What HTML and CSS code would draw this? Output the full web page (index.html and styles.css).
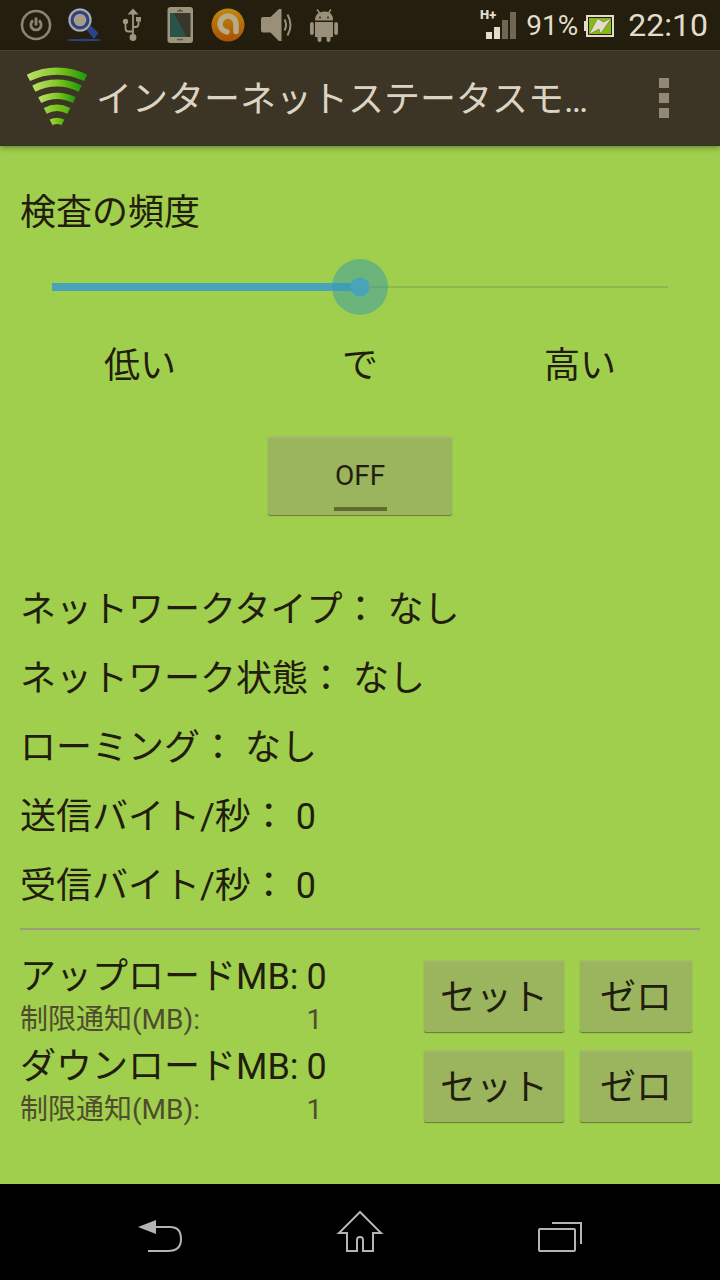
FILE: index.html
```html
<!DOCTYPE html>
<html lang="ja">
<head>
    <meta charset="UTF-8">
    <meta name="viewport" content="width=device-width, initial-scale=1">
    <title>インターネットステータスモ…</title>
    <link rel="stylesheet" href="styles.css">
</head>
<body>
    <div class="status-bar">
        <div class="status-icons">
            <svg width="48" height="50" viewBox="0 0 48 50" fill="none" stroke="#8d8370">
                <circle cx="24" cy="25" r="14" stroke-width="2.6"/>
                <path d="M21 20.5a5.2 5.2 0 1 0 6 0" stroke-width="2.8"/>
                <path d="M24 17.5v8" stroke-width="2.8"/>
            </svg>
            <svg width="48" height="50" viewBox="0 0 48 50">
                <path d="M26 29l4-4 8.500 8-4.500 6z" fill="#2c4289"/>
                <circle cx="20" cy="20" r="12" fill="#2c4289"/>
                <circle cx="20" cy="20" r="10.500" fill="none" stroke="#b5ab90" stroke-width="2"/>
                <circle cx="20" cy="20" r="6.300" fill="#a69d84"/>
                <path d="M8 40q16-1.500 32 0q-16 1.500-32 0z" fill="#2c4289" stroke="#2c4289"/>
            </svg>
            <svg width="48" height="50" viewBox="0 0 48 50" fill="none" stroke="#a0967f" stroke-width="1.8">
                <path d="M25 13v24M17.500 22v6.500q0 3 3 3h4.500M30.500 19v5q0 3-3 3H25"/>
                <g fill="#a0967f" stroke="none">
                    <path d="M25 8.500l5.500 6h-11z"/>
                    <circle cx="25" cy="37.500" r="3.400"/>
                    <circle cx="17.500" cy="21.500" r="2.700"/>
                    <path d="M28 17h5v4.500h-5z"/>
                </g>
            </svg>
            <svg width="48" height="50" viewBox="0 0 48 50">
                <rect x="11.500" y="7" width="25.500" height="36" rx="3" fill="#9d947e"/>
                <path d="M14 13h20.500v24H14z" fill="#37372b"/>
                <path d="M14 13h4l12.500 24H14z" fill="#285447"/>
                <path d="M21 11h6M24 9v2M21 39.500h6" stroke="#625a47" stroke-width="1.5"/>
            </svg>
            <svg width="48" height="50" viewBox="0 0 48 50">
                <defs>
                    <linearGradient id="orange" x1="0" y1="0" x2="0" y2="1">
                        <stop offset="0" stop-color="#c08a0c"/>
                        <stop offset="1" stop-color="#aa5007"/>
                    </linearGradient>
                </defs>
                <circle cx="24" cy="25" r="16.500" fill="url(#orange)"/>
                <path d="M23 32a8 8 0 1 1 9-8v7.500" fill="none" stroke="#b7ab8a" stroke-width="5.500" stroke-linecap="round"/>
            </svg>
            <svg width="48" height="50" viewBox="0 0 48 50" fill="none" stroke="#9a907a" stroke-width="2">
                <path d="M11 17h7.500L27 9h2.500v32H27l-8.500-8.500H11q-2 0-2-2V19q0-2 2-2z" fill="#9a907a" stroke="none"/>
                <path d="M32.500 19.500q3 5.500 0 11M35.500 14.500q6 10.500 0 21"/>
            </svg>
            <svg width="48" height="50" viewBox="0 0 48 50" fill="#9a907a">
                <path d="M15 20.500q0-8.500 9-9t9 9z"/>
                <path d="M17 9.500l3 4M31 9.500l-3 4" stroke="#9a907a" stroke-width="1.5"/>
                <path d="M15 22h18v15H15z"/>
                <rect x="10" y="22" width="3.800" height="13" rx="1.900"/>
                <rect x="34.200" y="22" width="3.800" height="13" rx="1.900"/>
                <rect x="17.500" y="33" width="4" height="9" rx="1.900"/>
                <rect x="26.500" y="33" width="4" height="9" rx="1.900"/>
                <circle cx="20" cy="17.500" r=".9" fill="#241e0e"/>
                <circle cx="28" cy="17.500" r=".9" fill="#241e0e"/>
            </svg>
        </div>
        <div class="status-info">
            <svg width="40" height="50" viewBox="0 0 40 50" fill="#e3dcca">
                <text class="network" x="0" y="19">H+</text>
                <path d="M6 32h6v7H6zM14 27h6v12h-6z"/>
                <path d="M22 20h6v19h-6zM30 12h6v27h-6z" fill="#6f6753"/>
            </svg>
            <span class="battery-level">91%</span>
            <svg width="32" height="50" viewBox="0 0 32 50">
                <path d="M0 21h3v10H0z" fill="#e3dcca"/>
                <rect x="3" y="16" width="26" height="20" fill="#241e0e" stroke="#e3dcca" stroke-width="2"/>
                <path d="M5 18h22v16H5z" fill="#86b913"/>
                <path d="M27.500 18l-8 4-6-3.500-8.500 16 10-5.500 1.500 5z" fill="#e3dcca" stroke="#5c6b20" stroke-width=".5"/>
            </svg>
            <time class="clock">22:10</time>
        </div>
    </div>

    <header class="action-bar">
        <svg class="app-icon" width="64" height="64" viewBox="0 0 64 64" fill="none">
            <defs>
                <linearGradient id="leaf" x1="0" y1="0" x2="1" y2="0">
                    <stop offset="0" stop-color="#b9df65"/>
                    <stop offset=".45" stop-color="#8cca32"/>
                    <stop offset=".6" stop-color="#6fbf14"/>
                    <stop offset="1" stop-color="#239a12"/>
                </linearGradient>
                <linearGradient id="leaf-small" x1="0" y1="0" x2="1" y2="0">
                    <stop offset="0" stop-color="#9ad344"/>
                    <stop offset=".5" stop-color="#7cc418"/>
                    <stop offset="1" stop-color="#56b314"/>
                </linearGradient>
            </defs>
            <g stroke="url(#leaf)">
                <path d="M4.400 11.900A63 63 0 0 1 61.600 11.900" stroke-width="7.200"/>
                <path d="M9.800 22.600A51 51 0 0 1 56.200 22.600" stroke-width="6.800"/>
                <path d="M15.700 34.100A38 38 0 0 1 50.300 34.100" stroke-width="6.600"/>
            </g>
            <g stroke="url(#leaf-small)">
                <path d="M21.200 44.800A26 26 0 0 1 44.800 44.800" stroke-width="6.400"/>
                <path d="M27.100 56.400A13 13 0 0 1 38.900 56.400" stroke-width="6.400"/>
            </g>
        </svg>
        <h1>インターネットステータスモ…</h1>
        <button type="button" class="menu-btn" aria-label="メニュー">
            <span></span><span></span><span></span>
        </button>
    </header>

    <main>
        <label class="frequency-label" for="frequency">検査の頻度</label>
        <input type="range" id="frequency" class="slider" min="0" max="100" value="50">
        <div class="slider-marks">
            <span>低い</span>
            <span>で</span>
            <span>高い</span>
        </div>

        <button type="button" class="btn toggle" aria-pressed="false">OFF</button>

        <div class="info">
            <p>ネットワークタイプ： なし</p>
            <p>ネットワーク状態： なし</p>
            <p>ローミング： なし</p>
            <p>送信バイト/秒： 0</p>
            <p>受信バイト/秒： 0</p>
        </div>

        <hr>

        <div class="traffic">
            <div class="traffic-row">
                <div class="counter">
                    <span>アップロードMB:</span><span>0</span>
                    <span class="limit">制限通知(MB):</span><span class="limit">1</span>
                </div>
                <button type="button" class="btn set">セット</button>
                <button type="button" class="btn zero">ゼロ</button>
            </div>
            <div class="traffic-row">
                <div class="counter">
                    <span>ダウンロードMB:</span><span>0</span>
                    <span class="limit">制限通知(MB):</span><span class="limit">1</span>
                </div>
                <button type="button" class="btn set">セット</button>
                <button type="button" class="btn zero">ゼロ</button>
            </div>
        </div>
    </main>

    <nav class="nav-bar">
        <button type="button" aria-label="戻る">
            <svg width="56" height="56" viewBox="0 0 56 56" fill="none" stroke="#b4b4b4" stroke-width="2">
                <path d="M6 23l18-7v14z" fill="#b4b4b4" stroke="none"/>
                <path d="M24 23h14c8 0 11 4 11 12s-4 12-13 12H16"/>
            </svg>
        </button>
        <button type="button" aria-label="ホーム">
            <svg width="56" height="56" viewBox="0 0 56 56" fill="none" stroke="#b4b4b4" stroke-width="2">
                <path d="M28 8L7 29h8v18h10V36a3 3 0 0 1 6 0v11h10V29h8z"/>
            </svg>
        </button>
        <button type="button" aria-label="履歴">
            <svg width="56" height="56" viewBox="0 0 56 56" fill="none" stroke="#b4b4b4" stroke-width="2">
                <rect x="7" y="25" width="36" height="22" rx="1"/>
                <path d="M20 19h29v21"/>
            </svg>
        </button>
    </nav>
</body>
</html>
```

FILE: styles.css
```css
* {
    box-sizing: border-box;
}

body {
    margin: 0;
    min-height: 100vh;
    display: flex;
    flex-direction: column;
    font-family: Roboto, "Noto Sans CJK JP", sans-serif;
    font-size: 36px;
    color: #231d0e;
    background-color: #9fcf4c;
}

svg {
    display: block;
    flex-shrink: 0;
}

button {
    font: inherit;
    color: inherit;
    border: none;
    background: none;
    padding: 0;
    cursor: pointer;
}

/* status bar */
.status-bar {
    display: flex;
    justify-content: space-between;
    height: 50px;
    padding: 0 12px;
    background-color: #241e0e;
    color: #e3dcca;
}

.status-icons,
.status-info {
    display: flex;
    align-items: center;
}

.network {
    font-size: 13px;
    font-weight: 900;
}

.battery-level {
    font-size: 28px;
    margin: 0 6px;
}

.clock {
    font-size: 32px;
    margin-left: 12px;
}

/* action bar */
.action-bar {
    display: flex;
    align-items: center;
    gap: 8px;
    height: 96px;
    padding-left: 24px;
    background-color: #3c3525;
    border-top: 1px solid #484032;
    border-bottom: 1px solid #363020;
    color: #dcd4c2;
    box-shadow: 0 1px 6px rgba(35, 29, 14, 0.5);
}

.action-bar h1 {
    flex: 1;
    margin: 0;
    padding-bottom: 4px;
    font-size: 36px;
    font-weight: 400;
    white-space: nowrap;
}

.menu-btn {
    display: flex;
    flex-direction: column;
    align-items: center;
    gap: 5px;
    width: 112px;
}

.menu-btn span {
    width: 10px;
    height: 10px;
    background-color: #918875;
}

/* content */
main {
    flex: 1;
    display: flex;
    flex-direction: column;
    padding: 43px 20px 40px;
    line-height: 48px;
}

.slider {
    appearance: none;
    height: 56px;
    margin: 22px 4px 27px;
    background:
        linear-gradient(#4aa3b8, #4aa3b8) 28px center / calc(50% - 28px) 8px no-repeat,
        linear-gradient(#8fb74c, #8fb74c) center / calc(100% - 56px) 2px no-repeat;
}

.slider::-webkit-slider-thumb {
    appearance: none;
    width: 56px;
    height: 56px;
    border-radius: 50%;
    background: radial-gradient(circle, #4aa3b8 9px, rgba(55, 153, 172, 0.5) 10px);
}

.slider-marks {
    display: grid;
    grid-template-columns: repeat(3, 1fr);
    padding: 0 10px;
    text-align: center;
}

.btn {
    height: 72px;
    padding-top: 4px;
    border-radius: 2px;
    background-color: #9bb45e;
    box-shadow: inset 0 2px #a5ba6c, 0 1px 1px #66782f;
}

.toggle {
    display: flex;
    flex-direction: column;
    align-items: center;
    justify-content: flex-end;
    align-self: center;
    width: 184px;
    height: 79px;
    margin-top: 46px;
    padding-bottom: 4px;
    font-size: 28px;
    line-height: 32px;
}

.toggle::after {
    content: "";
    width: 53px;
    height: 4px;
    margin-top: 15px;
    background-color: #606b31;
}

.info {
    display: flex;
    flex-direction: column;
    gap: 21px;
    margin-top: 71px;
}

.info p {
    margin: 0;
}

hr {
    width: 100%;
    height: 2px;
    margin: 18px 0 21px;
    border: none;
    background-color: #a09a80;
}

.traffic {
    display: flex;
    flex-direction: column;
    padding-right: 8px;
}

.traffic-row {
    display: flex;
    align-items: center;
    gap: 16px;
}

.counter {
    flex: 1;
    display: grid;
    grid-template-columns: auto 1fr;
    column-gap: 8px;
    padding-top: 4px;
    line-height: 44px;
}

.limit {
    font-size: 28px;
    line-height: 42px;
    color: #514b30;
}

.set {
    width: 140px;
}

.zero {
    width: 112px;
}

/* navigation bar */
.nav-bar {
    display: flex;
    height: 96px;
    padding: 0 60px;
    background-color: #000;
}

.nav-bar button {
    flex: 1;
    display: flex;
    align-items: center;
    justify-content: center;
}
```
